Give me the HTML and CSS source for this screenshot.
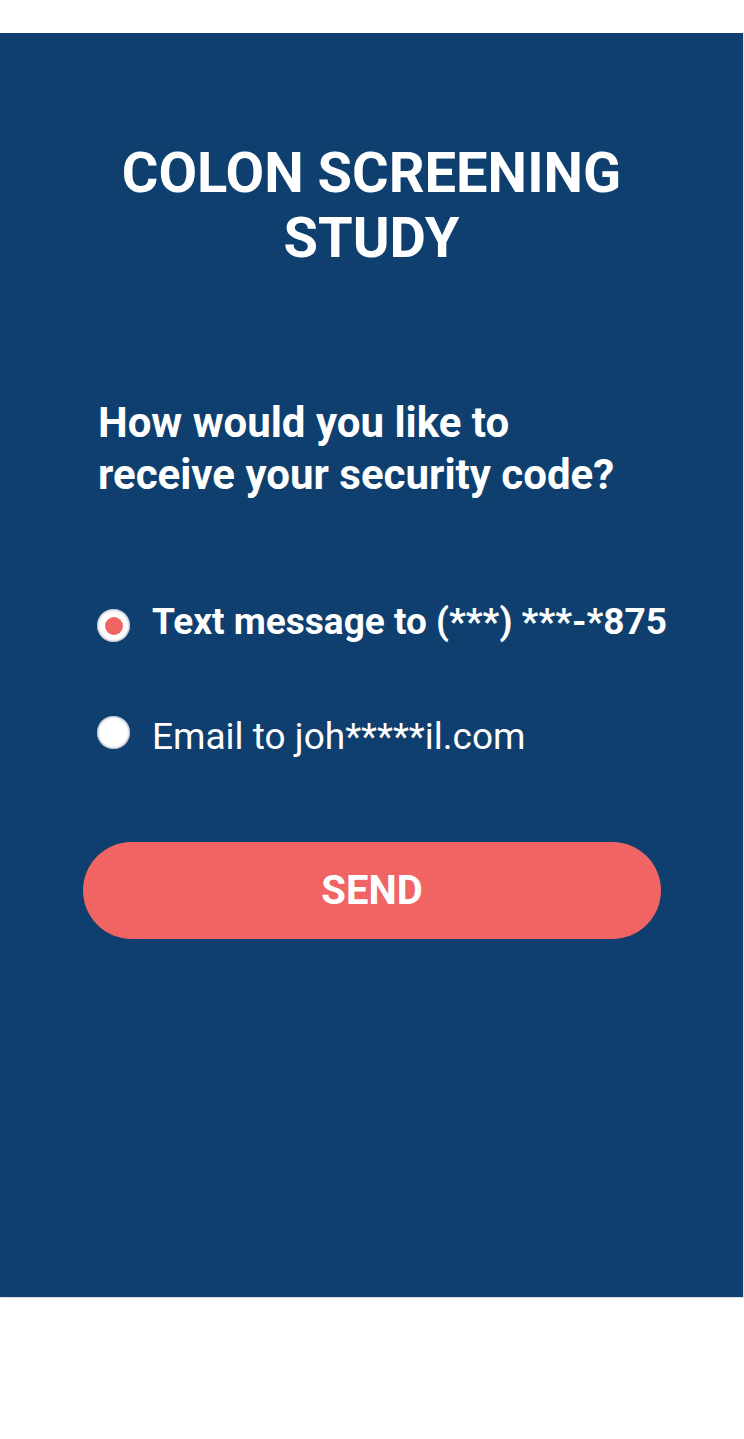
FILE: index.html
```html
<!DOCTYPE html>
<html lang="en">
<head>
<meta charset="utf-8">
<title>Colon Screening Study</title>
<link rel="stylesheet" href="styles.css">
</head>
<body>
<main class="panel">
  <h1 class="title">COLON SCREENING<br>STUDY</h1>
  <p class="question">How would you like to<br>receive your security code?</p>
  <div class="options">
    <label class="option option-selected">
      <span class="radio"><span class="dot"></span></span>
      <span class="option-text">Text message to (***) ***-*875</span>
    </label>
    <label class="option option-plain">
      <span class="radio"></span>
      <span class="option-text">Email to joh*****il.com</span>
    </label>
  </div>
  <button class="send" type="button">SEND</button>
</main>
</body>
</html>
```
FILE: styles.css
```css
html, body {
  margin: 0;
  padding: 0;
  background: #ffffff;
}
body {
  font-family: Roboto, "Liberation Sans", sans-serif;
  height: 1439px;
}
.panel {
  margin-top: 33px;
  width: 743px;
  height: 1264px;
  background: #0e3f6e;
  box-sizing: border-box;
  padding-top: 108px;
  color: #ffffff;
  display: flex;
  flex-direction: column;
  box-shadow: 1px 1px 1px rgba(0,0,0,0.12);
}
.title {
  margin: 0;
  text-align: center;
  font-size: 56px;
  line-height: 65px;
  font-weight: 700;
}
.question {
  margin: 126px 0 0 98px;
  font-size: 42px;
  line-height: 52px;
  font-weight: 700;
}
.options {
  margin: 99px 0 0 97px;
  display: flex;
  flex-direction: column;
  gap: 71px;
}
.option {
  display: flex;
  align-items: flex-start;
  gap: 22px;
}
.radio {
  width: 33px;
  height: 33px;
  border-radius: 50%;
  background: #ffffff;
  box-shadow: 0 0 2px 1px rgba(150,160,185,0.85) inset;
  display: flex;
  align-items: center;
  justify-content: center;
  flex-shrink: 0;
}
.option-selected .radio {
  margin-top: 9px;
}
.option-plain .radio {
  margin-top: 1px;
}
.dot {
  width: 18px;
  height: 18px;
  border-radius: 50%;
  background: #f06464;
}
.option-text {
  font-size: 37px;
  line-height: 44px;
  font-weight: 400;
}
.option-selected .option-text {
  font-weight: 700;
}
.send {
  margin: 83px 0 0 83px;
  width: 578px;
  height: 97px;
  border: none;
  border-radius: 49px;
  background: #f16464;
  color: #ffffff;
  font-family: Roboto, "Liberation Sans", sans-serif;
  font-weight: 700;
  font-size: 40px;
  padding: 0;
}
```
